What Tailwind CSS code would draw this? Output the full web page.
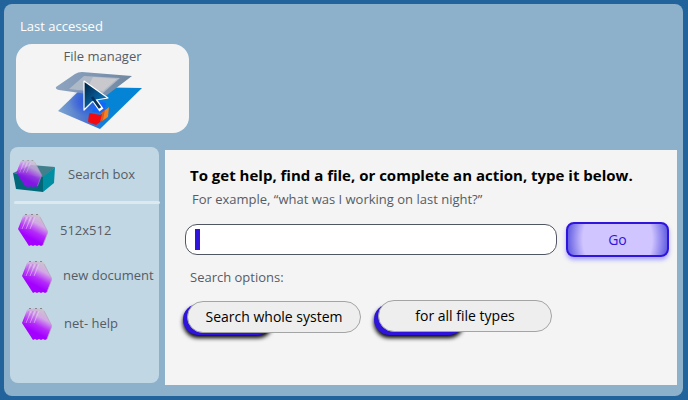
<!DOCTYPE html>
<html lang="en">
<head>
  <meta charset="UTF-8">
  <meta name="viewport" content="width=device-width, initial-scale=1.0">
  <title>Search box</title>
  <script src="https://cdn.jsdelivr.net/npm/@tailwindcss/browser@4"></script>
</head>
<body class="min-h-screen flex bg-[#22639b] p-1 pr-[5px] font-['Open_Sans','Noto_Sans',sans-serif] text-[#555c66]">

  <!-- shared icon shapes -->
  <svg class="absolute size-0" aria-hidden="true">
    <defs>
      <linearGradient id="sheet" x1="0.75" y1="0.05" x2="0.4" y2="0.75">
        <stop offset="0" stop-color="#c9c8ca"/>
        <stop offset="0.35" stop-color="#d3a8e6"/>
        <stop offset="0.7" stop-color="#b52bfa"/>
        <stop offset="1" stop-color="#a300ff"/>
      </linearGradient>
      <symbol id="stack" viewBox="0 0 30 32">
        <path fill="url(#sheet)" d="M0 15 5 2 8 0 10 1 12 0 14 1 16 0 18 1 20 0 22 2 30 18 25 31 23 32 21 31 19 32 17 31 15 32 13 31 11 32Z"/>
        <path d="M7 3 2 15M11 3 6 15M15 3 10 15" fill="none" stroke="#b45be0" stroke-width="1" stroke-opacity="0.5"/>
        <path d="M9 3 4 15M13 3 8 15M17 3 12 15" fill="none" stroke="#e8d0f2" stroke-width="1" stroke-opacity="0.6"/>
        <path d="M7 .5h2M13 .5h2M18 .5h2" stroke="#777" stroke-width="0.8"/>
        <path d="M22 3 30 18 25 31" fill="none" stroke="#b9a3bf" stroke-width="0.7"/>
      </symbol>
    </defs>
  </svg>

  <div class="flex-1 flex flex-col rounded-lg bg-[#8db1cb] pl-1.5 pr-1.5 pb-[11px]">
    <header class="pl-1.5 pt-3">
      <h1 class="pl-1 text-[13px] leading-5 text-white">Last accessed</h1>
      <a href="#" class="mt-2 flex w-[173px] h-[89px] flex-col items-center rounded-2xl bg-[#f4f4f4] pt-0.5 text-[13px] leading-5">
        File manager
        <svg class="mr-2 w-[88px] h-[64px]" viewBox="0 0 88 64" aria-hidden="true">
          <defs>
            <linearGradient id="floor" x1="0" y1="0.6" x2="0.65" y2="0.5">
              <stop offset="0" stop-color="#7fa6cf"/>
              <stop offset="0.45" stop-color="#4d76cf"/>
              <stop offset="0.75" stop-color="#0d7fdc"/>
              <stop offset="1" stop-color="#0583d5"/>
            </linearGradient>
            <linearGradient id="frame">
              <stop offset="0" stop-color="#8da3bf"/>
              <stop offset="0.5" stop-color="#7f96b5"/>
              <stop offset="1" stop-color="#70879f"/>
            </linearGradient>
            <linearGradient id="arrow" x1="0" y1="0" x2="0.7" y2="0.8">
              <stop offset="0" stop-color="#001e3c"/>
              <stop offset="1" stop-color="#0872ba"/>
            </linearGradient>
            <radialGradient id="glow">
              <stop offset="0" stop-color="#2145e8" stop-opacity="0.7"/>
              <stop offset="1" stop-color="#2145e8" stop-opacity="0"/>
            </radialGradient>
          </defs>
          <path fill="url(#floor)" d="M28 21 87 22 45 63 3 45Z"/>
          <path fill="url(#frame)" d="M1 21 20 8Q23 6 27 6L77 10 52 29Q50 31 46 30L4 24Q0 23 1 21Z"/>
          <path fill="#aeb9c7" d="M14 23 48 27 65 12 29 10Z"/>
          <path fill="#c8c8cd" d="M32 23 48 25 62 13 38 11Z"/>
          <ellipse cx="32" cy="36" rx="18" ry="14" fill="url(#glow)"/>
          <path fill="#1266ff" d="M42 35 51 37 49 47 37 46Z"/>
          <path fill="#f58220" d="M49 45 54 41 53 51 47 55Z"/>
          <path fill="#d85a20" d="M46 47 50 44 48 54 44 56Z"/>
          <path fill="#f20a10" d="M35 47 45 49 47 48 45 56 41 59 33 56 34 48Z"/>
          <path d="M38 32 45 42" stroke="#fff" stroke-width="5" stroke-linecap="square"/>
          <path fill="url(#arrow)" stroke="#fff" stroke-width="1.2" stroke-linejoin="round" d="M29 15 53 32 41 34 37 36 29 44Z"/>
          <path d="M37 31 45 42" stroke="#06325c" stroke-width="2.8"/>
        </svg>
      </a>
    </header>

    <div class="mt-3.5 flex flex-1 gap-1.5">
      <nav class="mb-0.5 flex w-[149px] shrink-0 flex-col rounded-lg bg-[#c2d7e4] text-[13px] leading-5">
        <a href="#" class="flex h-[54px] items-center gap-3 pl-[3px]">
          <svg class="mt-1 w-[43px] h-8 shrink-0" viewBox="0 0 43 32" aria-hidden="true">
            <path fill="#407f8b" d="M0 13 18 5 42 7 30 18Z"/>
            <path fill="#006879" d="M0 13 30 17 30 32 3 29Z"/>
            <path fill="#008ea3" d="M30 17 42 7 41 23 30 32Z"/>
            <use href="#stack" x="1" y="0" width="30" height="27" opacity="0.8"/>
          </svg>
          Search box
        </a>
        <hr class="-mr-px ml-1 h-[3px] rounded-full border-0 bg-[#dbe9f1]">
        <a href="#" class="mt-2.5 flex h-8 items-center gap-3 pl-2">
          <svg class="w-[30px] h-8 shrink-0" aria-hidden="true"><use href="#stack"/></svg>
          512x512
        </a>
        <a href="#" class="mt-[15px] flex h-8 items-center gap-[11px] pl-3">
          <svg class="w-[30px] h-8 shrink-0" aria-hidden="true"><use href="#stack"/></svg>
          <span class="whitespace-nowrap pb-1">new document</span>
        </a>
        <a href="#" class="mt-[15px] flex h-8 items-center gap-3 pl-3">
          <svg class="w-[30px] h-8 shrink-0" aria-hidden="true"><use href="#stack"/></svg>
          <span class="pb-0.5">net- help</span>
        </a>
      </nav>

      <main class="mt-[3px] flex-1 bg-[#f4f4f4] pl-5 pr-2 pt-[15px]">
        <h2 class="pl-[5px] text-[15px] font-bold leading-5 text-black">To get help, find a file, or complete an action, type it below.</h2>
        <label for="query" class="mt-1 block pl-[7px] text-[13px] leading-5">For example, “what was I working on last night?”</label>
        <form class="mt-[13px] flex items-center gap-[9px]">
          <div class="relative flex-1">
            <input id="query" type="text" class="block h-[31px] w-full rounded-xl border border-[#505762] bg-white px-2.5 text-sm text-black caret-[#2f14dc] outline-none">
            <span class="pointer-events-none absolute left-2.5 top-[5px] h-[21px] w-[5px] bg-[#2f14dc]"></span>
          </div>
          <button type="submit" class="h-[35px] w-[103px] rounded-lg border-2 border-[#2f14dc] bg-[radial-gradient(ellipse_54px_62px_at_center,#d1c5ff_64%,#5a56e0_95%)] text-sm text-[#2f14dc] shadow-[0_3px_4px_#a9a6ff]">Go</button>
        </form>
        <p class="mt-2.5 pl-[5px] text-[13px] leading-5">Search options:</p>
        <div class="mt-[13px] flex gap-[17px] pl-0.5">
          <div class="relative isolate mt-px">
            <span class="absolute -left-1 top-[3px] -z-10 h-[31px] w-[90px] rounded-2xl bg-[#2f14dc] shadow-[0_3px_4px_#000]"></span>
            <button type="button" class="h-8 w-[174px] rounded-2xl border border-[#a2a5a4] bg-[#eee] text-sm text-black">Search whole system</button>
          </div>
          <div class="relative isolate">
            <span class="absolute -left-1 top-1 -z-10 h-[31px] w-[90px] rounded-2xl bg-[#2f14dc] shadow-[0_3px_4px_#000]"></span>
            <button type="button" class="h-8 w-[174px] rounded-2xl border border-[#a2a5a4] bg-[#eee] text-sm text-black">for all file types</button>
          </div>
        </div>
      </main>
    </div>
  </div>

</body>
</html>
